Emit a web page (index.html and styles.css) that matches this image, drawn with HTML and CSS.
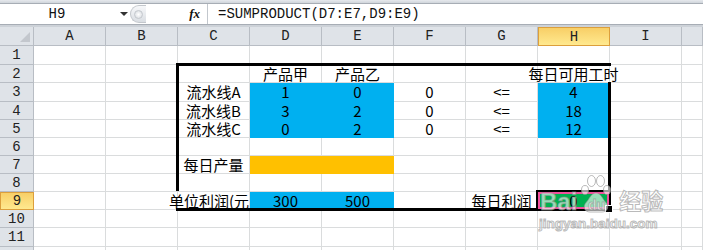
FILE: index.html
```html
<!DOCTYPE html>
<html lang="zh-CN">
<head>
  <meta charset="UTF-8">
  <title>SUMPRODUCT</title>
  <link rel="stylesheet" href="styles.css">
</head>
<body>
  <div class="topband"></div>
  <div class="fbar">
    <div class="namebox">H9</div>
    <div class="drop"></div>
    <div class="grip"><span class="knob"></span></div>
    <div class="fx">fx</div>
    <div class="formula">=SUMPRODUCT(D7:E7,D9:E9)</div>
  </div>
  <div class="gap"></div>

  <div class="sheet">
    <!-- column headers -->
    <div class="corner"><i></i></div>
    <div class="hd">A</div><div class="hd">B</div><div class="hd">C</div><div class="hd">D</div><div class="hd">E</div>
    <div class="hd">F</div><div class="hd">G</div><div class="hd on">H</div><div class="hd">I</div><div class="hd"></div>

    <!-- 1 -->
    <div class="rh">1</div>
    <div class="c"></div><div class="c"></div><div class="c"></div><div class="c"></div><div class="c"></div>
    <div class="c"></div><div class="c"></div><div class="c"></div><div class="c"></div><div class="c"></div>
    <!-- 2 -->
    <div class="rh">2</div>
    <div class="c"></div><div class="c"></div><div class="c"></div><div class="c">产品甲</div><div class="c">产品乙</div>
    <div class="c"></div><div class="c"></div><div class="c">每日可用工时</div><div class="c"></div><div class="c"></div>
    <!-- 3 -->
    <div class="rh">3</div>
    <div class="c"></div><div class="c"></div><div class="c">流水线A</div><div class="c blue">1</div><div class="c blue">0</div>
    <div class="c">0</div><div class="c">&lt;=</div><div class="c blue">4</div><div class="c"></div><div class="c"></div>
    <!-- 4 -->
    <div class="rh">4</div>
    <div class="c"></div><div class="c"></div><div class="c">流水线B</div><div class="c blue">3</div><div class="c blue">2</div>
    <div class="c">0</div><div class="c">&lt;=</div><div class="c blue">18</div><div class="c"></div><div class="c"></div>
    <!-- 5 -->
    <div class="rh">5</div>
    <div class="c"></div><div class="c"></div><div class="c">流水线C</div><div class="c blue">0</div><div class="c blue">2</div>
    <div class="c">0</div><div class="c">&lt;=</div><div class="c blue">12</div><div class="c"></div><div class="c"></div>
    <!-- 6 -->
    <div class="rh">6</div>
    <div class="c"></div><div class="c"></div><div class="c"></div><div class="c"></div><div class="c"></div>
    <div class="c"></div><div class="c"></div><div class="c"></div><div class="c"></div><div class="c"></div>
    <!-- 7 -->
    <div class="rh">7</div>
    <div class="c"></div><div class="c"></div><div class="c">每日产量</div><div class="c gold"></div><div class="c gold"></div>
    <div class="c"></div><div class="c"></div><div class="c"></div><div class="c"></div><div class="c"></div>
    <!-- 8 -->
    <div class="rh">8</div>
    <div class="c"></div><div class="c"></div><div class="c"></div><div class="c"></div><div class="c"></div>
    <div class="c"></div><div class="c"></div><div class="c"></div><div class="c"></div><div class="c"></div>
    <!-- 9 -->
    <div class="rh on">9</div>
    <div class="c"></div><div class="c"></div><div class="c r">单位利润(元</div><div class="c blue">300</div><div class="c blue">500</div>
    <div class="c"></div><div class="c">每日利润</div><div class="c cur">0</div><div class="c"></div><div class="c"></div>
    <!-- 10 -->
    <div class="rh">10</div>
    <div class="c"></div><div class="c"></div><div class="c"></div><div class="c"></div><div class="c"></div>
    <div class="c"></div><div class="c"></div><div class="c"></div><div class="c"></div><div class="c"></div>
    <!-- 11 -->
    <div class="rh">11</div>
    <div class="c"></div><div class="c"></div><div class="c"></div><div class="c"></div><div class="c"></div>
    <div class="c"></div><div class="c"></div><div class="c"></div><div class="c"></div><div class="c"></div>
    <!-- 12 -->
    <div class="rh">12</div>
    <div class="c"></div><div class="c"></div><div class="c"></div><div class="c"></div><div class="c"></div>
    <div class="c"></div><div class="c"></div><div class="c"></div><div class="c"></div><div class="c"></div>

    <!-- thick outline of the model, C2:H9 -->
    <div class="edge top"></div>
    <div class="edge left"></div>
    <div class="edge right"></div>
    <div class="edge bottom"></div>

    <div class="sel"></div>

    <div class="wm">
      <div class="wm-row">
        <span class="wm-bai">Bai</span>
        <svg class="paw" viewBox="0 0 30 38" width="30" height="38">
          <ellipse cx="4" cy="15" rx="3.5" ry="4.5"/>
          <ellipse cx="10.5" cy="6" rx="4" ry="5.5"/>
          <ellipse cx="19.5" cy="6" rx="4" ry="5.5"/>
          <ellipse cx="26" cy="15" rx="3.5" ry="4.5"/>
          <path d="M15 18c-5 0-6.5 6-9.5 9-4 4-2.5 10 3.5 10h12c6 0 7.5-6 3.5-10-3-3-4.5-9-9.5-9z"/>
          <text x="15.5" y="35" text-anchor="middle">du</text>
        </svg>
        <span class="wm-jy">经验</span>
      </div>
      <div class="wm-url">jingyan.baidu.com</div>
    </div>
  </div>
</body>
</html>
```
FILE: styles.css
```css
* {
  box-sizing: border-box;
}
body {
  margin: 0;
  width: 703px;
  height: 250px;
  overflow: hidden;
  background: #fff;
  font-family: "Noto Sans CJK SC", sans-serif;
}

/* formula bar */
.topband {
  height: 3px;
  background: linear-gradient(#e6e9ed, #d0d5db);
}
.fbar {
  display: flex;
  height: 21px;
  border-top: 1px solid #a7adb5;
  background: #fff;
  font-family: "Liberation Mono", monospace;
  font-size: 14px;
  color: #111;
}
.namebox {
  width: 118px;
  display: flex;
  align-items: center;
  justify-content: center;
  padding-right: 4px;
}
.drop {
  width: 12px;
  display: flex;
  align-items: center;
  justify-content: center;
}
.drop::before {
  content: "";
  border-left: 4px solid transparent;
  border-right: 4px solid transparent;
  border-top: 4px solid #333;
}
.grip {
  width: 16px;
  margin: 1px 0;
  border: 1px solid #c3c7cc;
  border-right: 0;
  border-radius: 10px 0 0 10px;
  background: linear-gradient(#f7f8fa, #dadee3);
  display: flex;
  align-items: center;
  justify-content: center;
}
.knob {
  width: 9px;
  height: 9px;
  border-radius: 50%;
  border: 1px solid #c4c8cd;
  background: radial-gradient(#fff, #d3d7dc);
}
.fx {
  width: 62px;
  display: flex;
  align-items: center;
  justify-content: flex-end;
  padding-right: 7px;
  border-right: 1px solid #c2c7cd;
  font-family: "Liberation Serif", serif;
  font-style: italic;
  font-weight: bold;
  font-size: 13px;
}
.formula {
  padding-left: 10px;
  display: flex;
  align-items: center;
}
.gap {
  height: 3px;
  border-top: 1px solid #a7adb5;
  background: #cdd2d8;
}

/* grid */
.sheet {
  position: relative;
  display: grid;
  grid-template-columns: 34px repeat(9, 72px) 1fr;
  grid-template-rows: 19px 19px 18px 19px 18px 18px 18px 18px 18px 18px 18px 19px 18px;
}
.corner,
.hd,
.rh {
  background: #dfe3e8;
  border-right: 1px solid #b8bdc4;
  border-bottom: 1px solid #b8bdc4;
  font-family: "Liberation Mono", monospace;
  font-size: 14px;
  color: #222;
  display: flex;
  align-items: center;
  justify-content: center;
}
.corner {
  align-items: flex-end;
  justify-content: flex-end;
  padding: 0 3px 3px 0;
}
.corner i {
  border-left: 10px solid transparent;
  border-bottom: 10px solid #c3c7cd;
}
.hd.on,
.rh.on {
  background: linear-gradient(#f8cf67, #ffe98f);
  border: 1px solid #dc9f3c;
}
.c {
  border-right: 1px solid #dadcdd;
  border-bottom: 1px solid #dadcdd;
  display: flex;
  align-items: center;
  justify-content: center;
  white-space: nowrap;
  font-size: 15px;
  line-height: 18px;
  color: #000;
}
.c.r {
  justify-content: flex-end;
}
.c.blue {
  background: #00b0f0;
  border-color: #00b0f0;
}
.c.gold {
  background: #ffc000;
  border-color: #ffc000;
}
.c.cur {
  background: #00b050;
  border-color: #00b050;
  box-shadow: inset 0 0 0 2px #f2509e;
}

.edge {
  position: absolute;
  background: #000;
}
.edge.top {
  left: 176px;
  top: 36px;
  width: 435px;
  height: 3px;
}
.edge.left {
  left: 176px;
  top: 36px;
  width: 3px;
  height: 128px;
}
.edge.right {
  left: 608px;
  top: 55px;
  width: 3px;
  height: 108px;
}
.edge.bottom {
  left: 176px;
  top: 181px;
  width: 361px;
  height: 3px;
}
.sel {
  position: absolute;
  left: 536px;
  top: 163px;
  width: 75px;
  height: 21px;
  border: 2px solid #000;
}
.sel::after {
  content: "";
  position: absolute;
  right: -4px;
  bottom: -4px;
  width: 6px;
  height: 6px;
  background: #000;
  border: 1px solid #fff;
}

/* watermark */
.wm {
  position: absolute;
  left: 540px;
  top: 146px;
  font-family: "Liberation Sans", "Noto Sans CJK SC", sans-serif;
  font-weight: bold;
  color: rgba(255, 255, 255, 0.6);
  -webkit-text-stroke: 1px rgba(140, 140, 140, 0.6);
}
.wm-row {
  display: flex;
  align-items: flex-end;
  height: 42px;
}
.wm-bai {
  font-size: 24px;
  line-height: 26px;
}
.paw {
  margin-left: 4px;
  margin-bottom: 2px;
  fill: rgba(255, 255, 255, 0.6);
  stroke: rgba(140, 140, 140, 0.6);
  stroke-width: 1;
}
.paw text {
  font-size: 14px;
  font-weight: bold;
}
.wm-jy {
  margin-left: 8px;
  font-size: 22px;
  line-height: 26px;
}
.wm-url {
  margin: 1px 0 0 -1px;
  font-size: 13.5px;
  line-height: 16px;
}
```
